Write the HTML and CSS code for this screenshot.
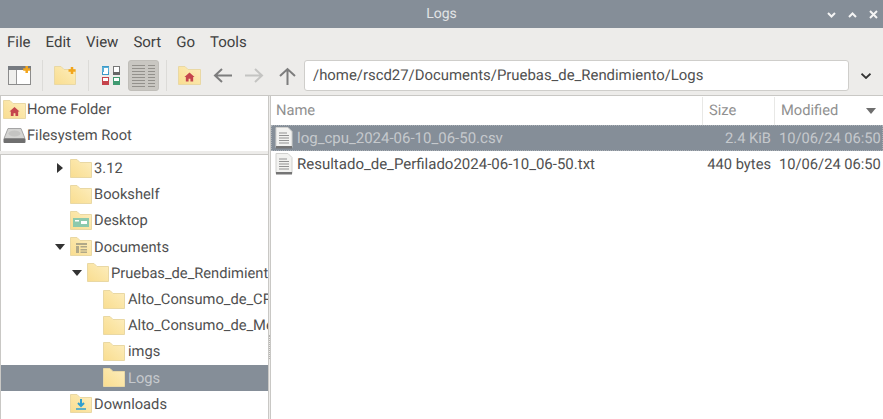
FILE: index.html
```html
<!DOCTYPE html>
<html lang="en">
<head>
<meta charset="utf-8">
<title>Logs</title>
<link rel="stylesheet" href="styles.css">
</head>
<body>
<svg class="defs" width="0" height="0">
  <defs>
    <linearGradient id="fg" x1="0" y1="1" x2="1" y2="0">
      <stop offset="0" stop-color="#f9dd90"/>
      <stop offset=".55" stop-color="#fbe6a8"/>
      <stop offset="1" stop-color="#fdeec0"/>
    </linearGradient>
  </defs>
  <symbol id="folder" viewBox="0 0 22 19">
    <path d="M.5 .5h6.500l3 3h11.500v15H.5z" fill="url(#fg)" stroke="#e9d8a4"/>
  </symbol>
  <symbol id="home" viewBox="0 0 12 12">
    <path d="M6 1 .5 6H2v5h3V8h2v3h3V6h1.500z" fill="#c5454d"/>
  </symbol>
  <symbol id="doc" viewBox="0 0 18 22">
    <path d="M1 .5h12l4 4v16H1z" fill="#f2f2f0" stroke="#d0d0ce"/>
    <path d="M4 6h8M4 8.500h10M4 11h10M4 13.500h10M4 16h10" stroke="#929292"/>
    <path d="M1 19h16v2.500H1z" fill="#757575"/>
  </symbol>
</svg>
<div class="window">
  <header class="titlebar">
    <span class="title">Logs</span>
    <div class="winbtns">
      <svg width="9" height="8" viewBox="0 0 9 8"><path d="M1 2 4.500 5.500 8 2" class="wb"/></svg>
      <svg width="9" height="8" viewBox="0 0 9 8"><path d="M1 6 4.500 2.500 8 6" class="wb"/></svg>
      <svg width="9" height="9" viewBox="0 0 9 9"><path d="M1 1l7 7M8 1 1 8" class="wb"/></svg>
    </div>
  </header>
  <nav class="menubar">
    <span>File</span><span>Edit</span><span>View</span><span>Sort</span><span>Go</span><span>Tools</span>
  </nav>
  <div class="toolbar">
    <svg class="tool" width="23" height="19" viewBox="0 0 23 19">
      <rect x=".5" y=".5" width="22" height="18" fill="#fff" stroke="#8c8c8c"/>
      <rect x="0" y="0" width="23" height="4" fill="#767a80"/>
      <rect x="1" y="4" width="7" height="14" fill="#efefed"/><path d="M8.500 4v14" stroke="#999"/>
      <path d="M18.700 0v7M15.200 3.500h7" stroke="#f2a51c" stroke-width="2.500"/>
    </svg>
    <i class="sep"></i>
    <svg class="tool" width="22" height="19" viewBox="0 0 22 19">
      <use href="#folder" width="22" height="19"/>
      <path d="M18 1v7M14.500 4.500h7" stroke="#f2a51c" stroke-width="2.500"/>
    </svg>
    <i class="sep wider"></i>
    <svg class="tool" width="18" height="19" viewBox="0 0 18 19">
      <rect x=".5" y=".5" width="6" height="8" fill="#fff" stroke="#3d9ac9"/><rect x="0" y="1" width="7" height="5" fill="#58aed6"/><rect x="2" y="2" width="4" height="4" fill="#fff"/>
      <rect x="11.500" y=".5" width="6" height="8" fill="#fff" stroke="#777"/><rect x="11" y="6" width="7" height="3" fill="#666"/>
      <rect x=".5" y="11.500" width="6" height="7" fill="#fff" stroke="#c6444c"/><rect x="0" y="15" width="7" height="4" fill="#c6444c"/>
      <rect x="11.500" y="11.500" width="6" height="7" fill="#fff" stroke="#3f9a70"/><rect x="11" y="15" width="7" height="4" fill="#3f9a70"/>
    </svg>
    <div class="active">
      <svg width="23" height="24" viewBox="0 0 23 24">
        <path d="M0 1.500h13M0 4.500h13M0 7.500h13M0 10.500h13M0 13.500h13M0 16.500h13M0 19.500h13M0 22.500h13M16 1.500h7M16 4.500h7M16 7.500h7M16 10.500h7M16 13.500h7M16 16.500h7M16 19.500h7M16 22.500h7" stroke="#93918c"/>
      </svg>
    </div>
    <i class="sep narrow"></i>
    <svg class="tool" width="23" height="19" viewBox="0 0 23 19">
      <path d="M.5 .5h6.500l3 3h12.500v15H.5z" fill="url(#fg)" stroke="#e9d8a4"/>
      <use href="#home" x="6" y="5.500" width="11" height="11"/>
    </svg>
    <svg class="tool back" width="19" height="15" viewBox="0 0 19 15"><path d="M19 7.500H2M9 1 2 7.500 9 14" class="arrow"/></svg>
    <svg class="tool fwd" width="19" height="15" viewBox="0 0 19 15"><path d="M0 7.500h17M10 1l7 6.500L10 14" class="arrow dim"/></svg>
    <svg class="tool up" width="17" height="18" viewBox="0 0 17 18"><path d="M8.500 18V2M1 9l7.500-7L16 9" class="arrow"/></svg>
    <div class="pathbox">/home/rscd27/Documents/Pruebas_de_Rendimiento/Logs</div>
    <svg class="chev" width="10" height="6" viewBox="0 0 10 6"><path d="M.5 .7 5 5l4.500-4.300" fill="none" stroke="#333" stroke-width="1.800"/></svg>
  </div>
  <main class="panes">
    <aside class="side">
      <div class="places">
        <div class="place">
          <svg width="23" height="19" viewBox="0 0 23 19">
            <path d="M.5 .5h6.500l3 3h12.500v15H.5z" fill="url(#fg)" stroke="#e9d8a4"/>
            <use href="#home" x="6" y="6" width="11" height="11"/>
          </svg>
          <span>Home Folder</span>
        </div>
        <div class="place">
          <svg width="23" height="15" viewBox="0 0 23 15">
            <path d="M5 .5h13l4 10H1z" fill="#d4d4d2" stroke="#a5a5a5"/>
            <ellipse cx="11.500" cy="5.500" rx="6" ry="3" fill="#c4c4c2"/>
            <rect x=".5" y="10.500" width="22" height="4.500" rx="1" fill="#6f6f6f"/>
          </svg>
          <span>Filesystem Root</span>
        </div>
      </div>
      <div class="tree">
        <div class="row lv1"><i class="tri right"></i><svg class="fi"><use href="#folder"/></svg><span>3.12</span></div>
        <div class="row lv1"><i class="tri none"></i><svg class="fi"><use href="#folder"/></svg><span>Bookshelf</span></div>
        <div class="row lv1"><i class="tri none"></i>
          <svg class="fi" viewBox="0 0 22 19"><use href="#folder" width="22" height="19"/><rect x="3" y="7" width="16" height="9" fill="#8cc9ad"/><rect x="11" y="10" width="6" height="3" fill="#fff"/><rect x="5" y="9" width="4" height="1.500" fill="#fff"/></svg>
          <span>Desktop</span></div>
        <div class="row lv1"><i class="tri down"></i>
          <svg class="fi" viewBox="0 0 22 19"><use href="#folder" width="22" height="19"/><path d="M6 6h11v2H6zM6 9h3v7H6zM10.500 9H17v1.500h-6.500zM10.500 12H17v1.500h-6.500zM10.500 14.500H17V16h-6.500z" fill="#b0a888"/></svg>
          <span>Documents</span></div>
        <div class="row lv2"><i class="tri down"></i><svg class="fi"><use href="#folder"/></svg><span>Pruebas_de_Rendimiento</span></div>
        <div class="row lv3"><svg class="fi"><use href="#folder"/></svg><span>Alto_Consumo_de_CPU</span></div>
        <div class="row lv3"><svg class="fi"><use href="#folder"/></svg><span>Alto_Consumo_de_Memoria</span></div>
        <div class="row lv3"><svg class="fi"><use href="#folder"/></svg><span>imgs</span></div>
        <div class="row lv3 sel"><svg class="fi"><use href="#folder"/></svg><span>Logs</span></div>
        <div class="row lv1"><i class="tri none"></i>
          <svg class="fi" viewBox="0 0 22 19"><use href="#folder" width="22" height="19"/><path d="M11 5v7M8 9l3 3 3-3" stroke="#2f9fd0" stroke-width="2" fill="none"/><path d="M6 15h10" stroke="#2f9fd0" stroke-width="1.500"/></svg>
          <span>Downloads</span></div>
      </div>
    </aside>
    <section class="files">
      <div class="cols">
        <div class="col c-name">Name</div>
        <div class="col c-size">Size</div>
        <div class="col c-mod">Modified<i class="sort"></i></div>
      </div>
      <div class="file sel">
        <svg class="doc"><use href="#doc"/></svg>
        <span class="f-name">log_cpu_2024-06-10_06-50.csv</span>
        <span class="f-size">2.4 KiB</span>
        <span class="f-mod">10/06/24 06:50</span>
      </div>
      <div class="file">
        <svg class="doc"><use href="#doc"/></svg>
        <span class="f-name">Resultado_de_Perfilado2024-06-10_06-50.txt</span>
        <span class="f-size">440 bytes</span>
        <span class="f-mod">10/06/24 06:50</span>
      </div>
    </section>
  </main>
</div>
</body>
</html>
```
FILE: styles.css
```css
* { box-sizing: border-box; }
html, body { margin: 0; padding: 0; height: 100%; overflow: hidden; }
body { font-family: Roboto, "Liberation Sans", sans-serif; font-size: 14.7px; color: #505050; background: #edecea; text-rendering: geometricPrecision; }
.defs { position: absolute; }
.window { width: 883px; height: 419px; display: flex; flex-direction: column; }

.titlebar { height: 28px; flex: none; background: #858e98; display: flex; align-items: center; justify-content: center; position: relative; color: #e2e4e6; font-size: 14px; }
.winbtns { position: absolute; right: 5px; top: 10px; display: flex; gap: 12px; align-items: center; }
.wb { fill: none; stroke: #f4f4f4; stroke-width: 2; }

.menubar { height: 28px; flex: none; display: flex; align-items: center; padding-left: 7px; gap: 15px; color: #404040; font-size: 15px; }

.toolbar { height: 39px; flex: none; display: flex; align-items: center; padding-left: 8px; }
.tool { flex: none; display: block; }
.active { width: 31px; height: 31px; flex: none; margin-left: 8px; background: #c9c7c2; border: 1px solid #c0beb9; border-radius: 3px; display: flex; justify-content: center; align-items: center; }
.sep { width: 1px; height: 31px; flex: none; background: #dcdbd8; margin: 0 11px; }
.sep.wider { margin: 0 13px 0 12px; }
.sep.narrow { margin: 0 11px 0 7px; }
.back { margin-left: 12px; }
.fwd { margin-left: 13px; }
.up { margin-left: 15px; }
.arrow { fill: none; stroke: #7d7d7d; stroke-width: 2; }
.arrow.dim { stroke: #c4c4c2; }
.pathbox { margin-left: 8px; width: 545px; height: 31px; flex: none; background: #fff; border: 1px solid #cfcecb; border-radius: 3px; padding-left: 8px; line-height: 29px; font-size: 14.9px; }
.chev { margin-left: 12px; flex: none; }

.panes { flex: 1; display: flex; min-height: 0; border-top: 1px solid #c9c8c5; }
.side { width: 269px; flex: none; display: flex; flex-direction: column; border-right: 1px solid #c9c8c5; position: relative; }
.side::after { content: ""; position: absolute; right: -2px; top: 239px; height: 24px; border-right: 1px dotted #b5b4b1; }
.places { height: 55px; flex: none; background: #fff; border-left: 1px solid #c9c8c5; }
.place { height: 26px; display: flex; align-items: center; padding-left: 2px; gap: 1px; }
.tree { flex: 1; margin-top: 3px; background: #fff; border-top: 1px solid #c9c8c5; border-left: 1px solid #c9c8c5; overflow: hidden; }
.row { height: 26.200px; display: flex; align-items: center; white-space: nowrap; }
.row span { margin-left: 2px; }
.lv1 { padding-left: 54px; }
.lv2 { padding-left: 71px; }
.lv3 { padding-left: 102px; }
.lv3 span { margin-left: 3px; }
.row.sel { background: #858e98; color: #c5c9cd; }
.fi { width: 22px; height: 19px; flex: none; }
.tri { width: 15px; flex: none; height: 10px; display: block; position: relative; }
.tri.right::before { content: ""; position: absolute; left: 2px; top: 0; border-left: 6px solid #333; border-top: 5px solid transparent; border-bottom: 5px solid transparent; }
.tri.down::before { content: ""; position: absolute; left: 0; top: 2px; border-top: 6px solid #333; border-left: 5.500px solid transparent; border-right: 5.500px solid transparent; }

.files { flex: 1; background: #fff; margin-left: 1px; border-left: 1px solid #c9c8c5; min-width: 0; overflow: hidden; }
.cols { height: 29px; display: flex; align-items: center; color: #909090; }
.col { height: 28px; line-height: 27px; padding-left: 5px; border-right: 1px solid #e8e8e6; flex: none; }
.c-name { width: 432px; }
.c-size { width: 72px; padding-left: 6px; }
.c-mod { width: 108px; padding-left: 6px; border-right: 0; position: relative; }
.sort { position: absolute; right: 7px; top: 11px; border-top: 6px solid #6e6e6e; border-left: 5px solid transparent; border-right: 5px solid transparent; }
.file { height: 26.200px; display: flex; align-items: center; white-space: nowrap; }
.file.sel { background: #858e98; color: #c5c9cd; outline: 1px dotted #aab0b6; outline-offset: -1px; }
.doc { width: 18px; height: 22px; margin-left: 4px; flex: none; }
.f-name { margin-left: 4px; width: 398px; flex: none; overflow: hidden; font-size: 15px; }
.f-size { width: 76px; flex: none; text-align: right; }
.f-mod { margin-left: 8px; flex: none; }
```
